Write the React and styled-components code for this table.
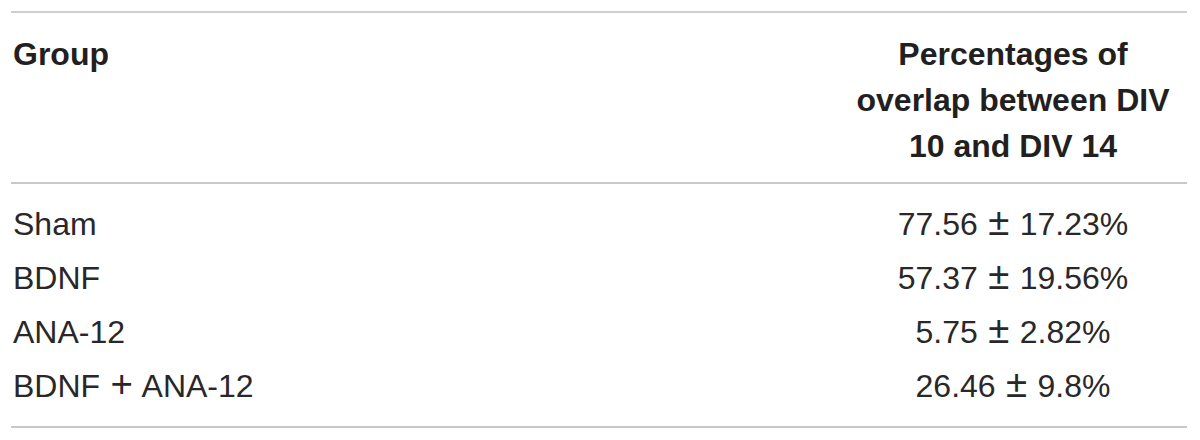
import React from "react";
import styled, { createGlobalStyle } from "styled-components";

const Global = createGlobalStyle`
  html, body { margin: 0; padding: 0; background: #ffffff; }
  body { font-family: "Liberation Sans", Arial, Helvetica, sans-serif; }
`;

const Page = styled.div`
  width: 1200px;
  height: 440px;
  box-sizing: border-box;
  padding: 11px 13px 0 11px;
  background: #fff;
`;

const Table = styled.table`
  width: 100%;
  border-collapse: collapse;
  border-top: 2px solid #cfcfcf;
  border-bottom: 2px solid #c8c8c8;
  color: #231f20;
  font-size: 32px;
`;

const HeadCell = styled.th`
  font-weight: 700;
  font-size: 32px;
  line-height: 46px;
  padding: 18px 0 13px 2px;
  vertical-align: top;
  text-align: ${(p) => (p.$center ? "center" : "left")};
  border-bottom: 2px solid #c8c8c8;
  width: ${(p) => p.$w || "auto"};
  ${(p) => p.$center && "padding-right: 4px;"}
`;

const Cell = styled.td`
  font-weight: 400;
  color: #2a2728;
  line-height: 54px;
  word-spacing: 1.5px;
  padding: 0 0 0 2px;
  text-align: ${(p) => (p.$center ? "center" : "left")};
  ${(p) => p.$center && "padding-right: 4px;"}
`;

const Sign = styled.span`
  font-size: 1.2em;
  line-height: 0;
`;

const FirstRow = styled.tr`
  td { padding-top: 13px; }
`;
const LastRow = styled.tr`
  td { padding-bottom: 13px; }
`;

const rows = [
  [["Sham"], "77.56", "17.23%"],
  [["BDNF"], "57.37", "19.56%"],
  [["ANA-12"], "5.75", "2.82%"],
  [["BDNF", "ANA-12"], "26.46", "9.8%"],
];

export default function App() {
  return (
    <>
      <Global />
      <Page>
        <Table>
          <thead>
            <tr>
              <HeadCell>Group</HeadCell>
              <HeadCell $center $w="340px">
                Percentages of
                <br />
                overlap between DIV
                <br />
                10 and DIV 14
              </HeadCell>
            </tr>
          </thead>
          <tbody>
            {rows.map(([parts, mean, sd], i) => {
              const Row = i === 0 ? FirstRow : i === rows.length - 1 ? LastRow : "tr";
              return (
                <Row key={parts.join("+")}>
                  <Cell>
                    {parts.length > 1 ? (
                      <>
                        {parts[0]} <Sign>+</Sign> {parts[1]}
                      </>
                    ) : (
                      parts[0]
                    )}
                  </Cell>
                  <Cell $center>
                    {mean} <Sign>±</Sign> {sd}
                  </Cell>
                </Row>
              );
            })}
          </tbody>
        </Table>
      </Page>
    </>
  );
}
